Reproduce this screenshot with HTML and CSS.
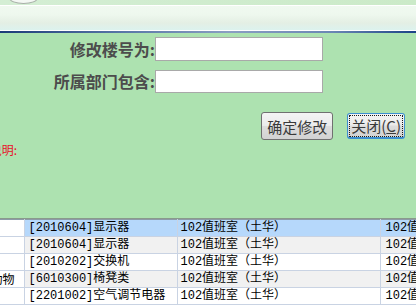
FILE: index.html
```html
<!DOCTYPE html>
<html>
<head>
    <meta name="viewport" content="width=device-width, initial-scale=1.0">
    <title>修改楼号</title>
    <link rel="stylesheet" href="styles.css">
</head>
<body>
    <div class="topbar"><span class="oval"></span></div>
    <div class="header"></div>
    <div class="rule"></div>

    <div class="panel">
        <div class="form">
            <div class="row">
                <label class="label">修改楼号为:</label>
                <input class="field" type="text">
            </div>
            <div class="row">
                <label class="label">所属部门包含:</label>
                <input class="field short" type="text">
            </div>
        </div>
        <div class="actions">
            <button class="btn">确定修改</button>
            <button class="btn focused">关闭(<u>C</u>)</button>
        </div>
        <div class="note"><span>说明:</span></div>
    </div>

    <div class="grid-wrap">
        <table class="grid">
            <colgroup>
                <col class="c1"><col class="c2"><col class="c3"><col class="c4">
            </colgroup>
            <tr class="selected">
                <td class="first"></td>
                <td>[2010604]显示器</td>
                <td>102值班室（土华）</td>
                <td>102值班室（土华）</td>
            </tr>
            <tr class="alt">
                <td class="first"></td>
                <td>[2010604]显示器</td>
                <td>102值班室（土华）</td>
                <td>102值班室（土华）</td>
            </tr>
            <tr>
                <td class="first"></td>
                <td>[2010202]交换机</td>
                <td>102值班室（土华）</td>
                <td>102值班室（土华）</td>
            </tr>
            <tr class="alt">
                <td class="first"><div class="clip">动物</div></td>
                <td>[6010300]椅凳类</td>
                <td>102值班室（土华）</td>
                <td>102值班室（土华）</td>
            </tr>
            <tr>
                <td class="first"></td>
                <td>[2201002]空气调节电器</td>
                <td>102值班室（土华）</td>
                <td>102值班室（土华）</td>
            </tr>
            <tr class="alt">
                <td class="first"></td>
                <td>[2201002]空气调节电器</td>
                <td>102值班室（土华）</td>
                <td>102值班室（土华）</td>
            </tr>
        </table>
    </div>
</body>
</html>
```

FILE: styles.css
```css
body {
    margin: 0;
    width: 416px;
    height: 305px;
    overflow: hidden;
    background: #ffffff;
    font-family: "Noto Sans CJK SC", "Noto Sans", sans-serif;
}
.topbar {
    height: 5px;
    background: linear-gradient(90deg, #d4eed4, #cbeac8);
    border-bottom: 1px solid #ffffff;
    overflow: hidden;
}
.oval {
    display: block;
    margin-left: 9px;
    width: 27px;
    height: 10px;
    margin-top: -8px;
    border-radius: 50%;
    border: 1px solid #a8b0a8;
    background: #f4f8f4;
}
.header {
    height: 24px;
    background: linear-gradient(180deg, #f0f9f0 0%, #eef8ee 35%, #e4efe4 70%, #dcf2ee 100%);
    border-bottom: 1px solid #ffffff;
}
.rule {
    height: 2px;
    background: linear-gradient(90deg, #1c3a78 0%, #5a78a8 30%, #8a9ec2 55%, #6a86b4 80%, #1c4286 100%);
}
.panel {
    height: 186px;
    background: #ade2b0;
    border-bottom: 1px solid #8a9a8c;
    padding-top: 4px;
    box-sizing: border-box;
}
.form {
    display: flex;
    flex-direction: column;
    gap: 8px;
}
.row {
    display: flex;
    align-items: center;
}
.label {
    width: 155px;
    text-align: right;
    font-size: 16px;
    font-weight: bold;
    color: #4c4c4c;
    white-space: nowrap;
}
.field {
    width: 168px;
    height: 24px;
    box-sizing: border-box;
    border: 1px solid #a9a9a9;
    background: #ffffff;
    margin: 0;
    padding: 0 3px;
}
.field.short {
    height: 23px;
}
.actions {
    display: flex;
    justify-content: flex-end;
    gap: 14px;
    padding-right: 11px;
    margin-top: 19px;
}
.btn {
    height: 28px;
    padding: 0 5px;
    font-family: "Noto Sans CJK SC", sans-serif;
    font-size: 15px;
    color: #3a3a3a;
    border: 1px solid #707070;
    border-radius: 3px;
    background: linear-gradient(180deg, #f4f4f4 0%, #ebebeb 48%, #dddddd 52%, #d2d2d2 100%);
    cursor: pointer;
}
.btn u {
    text-decoration: underline;
}
.focused {
    height: 26px;
    margin-top: 1px;
    padding: 0 3px;
    border: 1px solid #3c8fd0;
    border-bottom-width: 2px;
    outline: 1px dotted #1a1a1a;
    outline-offset: -3px;
}
.note {
    margin-top: 2px;
    width: 17px;
    overflow: hidden;
    display: flex;
    justify-content: flex-end;
    font-size: 12px;
    line-height: 16px;
    color: #e8102a;
    white-space: nowrap;
}
.grid-wrap {
    overflow: hidden;
}
.grid {
    width: 520px;
    table-layout: fixed;
    border-collapse: collapse;
    font-family: "Liberation Mono", "Noto Sans CJK SC", monospace;
    font-size: 12px;
    color: #000000;
}
.c1 { width: 24px; }
.c2 { width: 153px; }
.c3 { width: 203px; }
.c4 { width: 140px; }
.grid td {
    height: 16px;
    padding: 0 0 0 4px;
    line-height: 16px;
    border: 1px solid #c9d3e3;
    border-top: none;
    white-space: nowrap;
    overflow: hidden;
    background: #ffffff;
}
.grid tr:first-child td {
    border-top: 1px solid #8d9aa8;
}
.grid td:nth-child(3) {
    padding-left: 3px;
}
.grid td:nth-child(4) {
    padding-left: 5px;
}
.grid tr.alt td {
    background: #f1f1f1;
}
.grid tr.selected td {
    background: #b6d8fb;
}
.grid tr td.first {
    background: #ffffff;
    padding: 0;
    border-left: none;
}
.clip {
    display: flex;
    justify-content: flex-end;
    overflow: hidden;
    padding-right: 9px;
    font-family: "Noto Sans CJK SC", sans-serif;
}
```
